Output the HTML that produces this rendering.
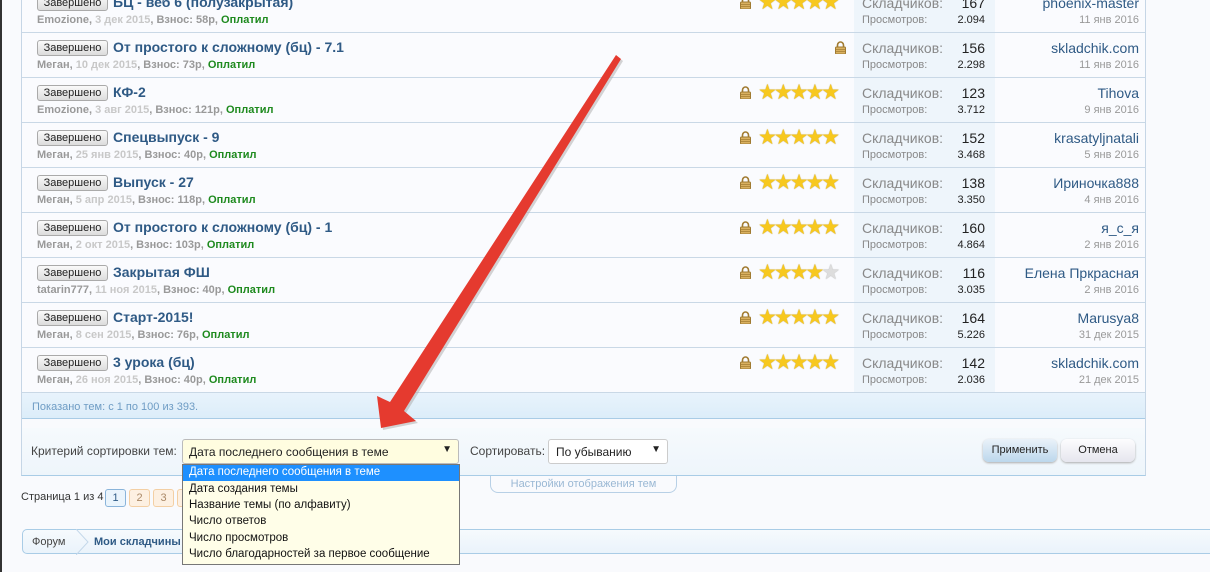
<!DOCTYPE html>
<html><head><meta charset="utf-8"><style>
*{margin:0;padding:0;box-sizing:border-box}
body{width:1210px;height:572px;overflow:hidden;background:#f9fafd;font-family:"Liberation Sans","DejaVu Sans",sans-serif;position:relative}
.edge{position:absolute;left:0;top:0;width:2px;height:572px;background:#333}
.tbl{position:absolute;left:21px;top:-12px;width:1125px;height:488px;border-left:1px solid #c6d6e6;border-right:1px solid #c6d6e6;border-bottom:1px solid #a9cce6}
.row{position:absolute;left:22px;width:1123px;height:45px;border-bottom:1px solid #c9d8e6;background:#fafbfe}
.stat{position:absolute;left:832px;top:0;width:141px;height:44px;background:#eef5fb}
.btn{position:absolute;left:15px;top:7px;width:71px;height:16px;border:1px solid #aaa;border-radius:3px;background:linear-gradient(#fafafa,#dcdcdc);font-size:11px;color:#222;text-align:center;line-height:14px}
.ttl{position:absolute;left:91px;top:6px;font-size:14px;font-weight:bold;color:#2f5a85;white-space:nowrap}
.meta{position:absolute;left:15px;top:26px;font-size:11px;font-weight:bold;color:#999;white-space:nowrap}
.meta i{font-style:normal;color:#c8c8c8}
.meta b{color:#1e8a1e}
.lk{position:absolute;top:8px;width:11px;height:13px}
.st{position:absolute;left:736px;top:2px;font-size:21px;color:#f7c81e;letter-spacing:-3px;text-shadow:0 0 1px #a87c00}
.l1{position:absolute;left:840px;top:7px;font-size:14px;color:#888}
.n1{position:absolute;right:160px;top:7px;font-size:14px;color:#222}
.l2{position:absolute;left:840px;top:26px;font-size:11px;color:#888}
.n2{position:absolute;right:160px;top:26px;font-size:11px;color:#222}
.u{position:absolute;right:6px;top:7px;font-size:14px;color:#2f5a85;white-space:nowrap}
.d{position:absolute;right:6px;top:26px;font-size:11px;color:#999}
</style></head><body>
<div class="edge"></div>
<div class="tbl"></div>

<svg width="0" height="0" style="position:absolute"><defs>
<g id="lock"><path d="M2.5 6V4a3 3 0 0 1 6 0v2" fill="none" stroke="#a07a30" stroke-width="1.6"/><rect x="0.5" y="6" width="10" height="7" rx="1" fill="#d9b060" stroke="#a07a30"/><line x1="1" y1="8.5" x2="10" y2="8.5" stroke="#a07a30" stroke-width=".7"/><line x1="1" y1="10.5" x2="10" y2="10.5" stroke="#a07a30" stroke-width=".7"/></g>
</defs></svg>

<div class="row" style="top:-12px"><div class="stat"></div><div class="btn">Завершено</div><div class="ttl">БЦ - веб 6 (полузакрытая)</div><div class="meta">Emozione, <i>3 дек 2015</i>, Взнос: 58р, <b>Оплатил</b></div><svg class="lk" style="left:718px"><use href="#lock"/></svg><div class="st">★★★★★</div><div class="l1">Складчиков:</div><div class="n1">167</div><div class="l2">Просмотров:</div><div class="n2">2.094</div><div class="u">phoenix-master</div><div class="d">11 янв 2016</div></div>

<div class="row" style="top:33px"><div class="stat"></div><div class="btn">Завершено</div><div class="ttl">От простого к сложному (бц) - 7.1</div><div class="meta">Меган, <i>10 дек 2015</i>, Взнос: 73р, <b>Оплатил</b></div><svg class="lk" style="left:813px"><use href="#lock"/></svg><div class="l1">Складчиков:</div><div class="n1">156</div><div class="l2">Просмотров:</div><div class="n2">2.298</div><div class="u">skladchik.com</div><div class="d">11 янв 2016</div></div>

<div class="row" style="top:78px"><div class="stat"></div><div class="btn">Завершено</div><div class="ttl">КФ-2</div><div class="meta">Emozione, <i>3 авг 2015</i>, Взнос: 121р, <b>Оплатил</b></div><svg class="lk" style="left:718px"><use href="#lock"/></svg><div class="st">★★★★★</div><div class="l1">Складчиков:</div><div class="n1">123</div><div class="l2">Просмотров:</div><div class="n2">3.712</div><div class="u">Tihova</div><div class="d">9 янв 2016</div></div>

<div class="row" style="top:123px"><div class="stat"></div><div class="btn">Завершено</div><div class="ttl">Спецвыпуск - 9</div><div class="meta">Меган, <i>25 янв 2015</i>, Взнос: 40р, <b>Оплатил</b></div><svg class="lk" style="left:718px"><use href="#lock"/></svg><div class="st">★★★★★</div><div class="l1">Складчиков:</div><div class="n1">152</div><div class="l2">Просмотров:</div><div class="n2">3.468</div><div class="u">krasatyljnatali</div><div class="d">5 янв 2016</div></div>

<div class="row" style="top:168px"><div class="stat"></div><div class="btn">Завершено</div><div class="ttl">Выпуск - 27</div><div class="meta">Меган, <i>5 апр 2015</i>, Взнос: 118р, <b>Оплатил</b></div><svg class="lk" style="left:718px"><use href="#lock"/></svg><div class="st">★★★★★</div><div class="l1">Складчиков:</div><div class="n1">138</div><div class="l2">Просмотров:</div><div class="n2">3.350</div><div class="u">Ириночка888</div><div class="d">4 янв 2016</div></div>

<div class="row" style="top:213px"><div class="stat"></div><div class="btn">Завершено</div><div class="ttl">От простого к сложному (бц) - 1</div><div class="meta">Меган, <i>2 окт 2015</i>, Взнос: 103р, <b>Оплатил</b></div><svg class="lk" style="left:718px"><use href="#lock"/></svg><div class="st">★★★★★</div><div class="l1">Складчиков:</div><div class="n1">160</div><div class="l2">Просмотров:</div><div class="n2">4.864</div><div class="u">я_с_я</div><div class="d">2 янв 2016</div></div>

<div class="row" style="top:258px"><div class="stat"></div><div class="btn">Завершено</div><div class="ttl">Закрытая ФШ</div><div class="meta">tatarin777, <i>11 ноя 2015</i>, Взнос: 40р, <b>Оплатил</b></div><svg class="lk" style="left:718px"><use href="#lock"/></svg><div class="st">★★★★<span style="color:#ddd;text-shadow:0 0 1px #999">★</span></div><div class="l1">Складчиков:</div><div class="n1">116</div><div class="l2">Просмотров:</div><div class="n2">3.035</div><div class="u">Елена Пркрасная</div><div class="d">2 янв 2016</div></div>

<div class="row" style="top:303px"><div class="stat"></div><div class="btn">Завершено</div><div class="ttl">Старт-2015!</div><div class="meta">Меган, <i>8 сен 2015</i>, Взнос: 76р, <b>Оплатил</b></div><svg class="lk" style="left:718px"><use href="#lock"/></svg><div class="st">★★★★★</div><div class="l1">Складчиков:</div><div class="n1">164</div><div class="l2">Просмотров:</div><div class="n2">5.226</div><div class="u">Marusya8</div><div class="d">31 дек 2015</div></div>

<div class="row" style="top:348px"><div class="stat"></div><div class="btn">Завершено</div><div class="ttl">3 урока (бц)</div><div class="meta">Меган, <i>26 ноя 2015</i>, Взнос: 40р, <b>Оплатил</b></div><svg class="lk" style="left:718px"><use href="#lock"/></svg><div class="st">★★★★★</div><div class="l1">Складчиков:</div><div class="n1">142</div><div class="l2">Просмотров:</div><div class="n2">2.036</div><div class="u">skladchik.com</div><div class="d">21 дек 2015</div></div>

<div style="position:absolute;left:22px;top:393px;width:1123px;height:26px;background:linear-gradient(#e8f3fc,#dcedf9);border-bottom:1px solid #a9cce6;font-size:11px;color:#6e9cc4;padding:8px 0 0 10px">Показано тем: с 1 по 100 из 393.</div>
<div style="position:absolute;left:22px;top:428px;width:1123px;height:47px;background:linear-gradient(#f6fafd,#eef5fb)"></div>
<div style="position:absolute;left:31px;top:444px;font-size:12px;color:#444">Критерий сортировки тем:</div>
<div style="position:absolute;left:182px;top:439px;width:277px;height:25px;border:1px solid #bbb;border-radius:3px;background:#fffde0;font-size:12px;color:#222;padding:5px 0 0 6px">Дата последнего сообщения в теме<span style="position:absolute;right:6px;top:4px;font-size:10px">▼</span></div>
<div style="position:absolute;left:470px;top:444px;font-size:12px;color:#444">Сортировать:</div>
<div style="position:absolute;left:548px;top:439px;width:120px;height:25px;border:1px solid #ccc;border-radius:3px;background:#fff;font-size:12px;color:#222;padding:5px 0 0 7px">По убыванию<span style="position:absolute;right:6px;top:4px;font-size:10px">▼</span></div>
<div style="position:absolute;left:983px;top:439px;width:74px;height:23px;border-radius:6px;background:linear-gradient(#eaf2f9,#bcd7ec);box-shadow:0 1px 2px #aaa;font-size:11px;color:#222;text-align:center;line-height:23px">Применить</div>
<div style="position:absolute;left:1061px;top:439px;width:74px;height:23px;border-radius:6px;background:linear-gradient(#fdfdfe,#e6e6ee);box-shadow:0 1px 2px #aaa;font-size:11px;color:#222;text-align:center;line-height:23px">Отмена</div>
<div style="position:absolute;left:490px;top:476px;width:187px;height:17px;border:1px solid #b8d0e6;border-top:none;border-radius:0 0 8px 8px;font-size:11px;color:#9ab8d4;text-align:center;line-height:16px">Настройки отображения тем</div>

<div style="position:absolute;left:21px;top:491px;font-size:11px;color:#333">Страница 1 из 4</div>
<div style="position:absolute;left:105px;top:489px;width:21px;height:18px;border:1px solid #8ab4da;border-radius:3px;background:#eaf4fc;font-size:11px;color:#2f5a85;text-align:center;line-height:16px">1</div>
<div style="position:absolute;left:129px;top:489px;width:21px;height:18px;border:1px solid #f3cfa4;border-radius:3px;background:#fdf0e2;font-size:11px;color:#aa8866;text-align:center;line-height:16px">2</div>
<div style="position:absolute;left:153px;top:489px;width:21px;height:18px;border:1px solid #f3cfa4;border-radius:3px;background:#fdf0e2;font-size:11px;color:#aa8866;text-align:center;line-height:16px">3</div>
<div style="position:absolute;left:177px;top:489px;width:10px;height:18px;border:1px solid #f3cfa4;border-radius:3px;background:#fdf0e2"></div>

<div style="position:absolute;left:22px;top:529px;width:1200px;height:25px;border:1px solid #a9cce6;border-radius:5px 0 0 5px;background:linear-gradient(#f6fafd,#eaf3fb)"></div>
<div style="position:absolute;left:32px;top:536px;font-size:11px;color:#444">Форум</div>
<svg style="position:absolute;left:76px;top:529px" width="14" height="26"><path d="M0 0 L12 13 L0 26" fill="none" stroke="#c4d8ea"/></svg>
<div style="position:absolute;left:94px;top:536px;font-size:11px;font-weight:bold;color:#2f5a85">Мои складчины</div>

<div style="position:absolute;left:182px;top:464px;width:278px;height:101px;border:1px solid #777;background:#fffee8;font-size:11.5px;color:#111">
<div style="background:#1e90ff;color:#fff;height:16px;padding:1px 0 0 6px">Дата последнего сообщения в теме</div>
<div style="height:16.5px;padding:2px 0 0 6px">Дата создания темы</div>
<div style="height:16.5px;padding:1px 0 0 6px">Название темы (по алфавиту)</div>
<div style="height:16.5px;padding:1px 0 0 6px">Число ответов</div>
<div style="height:16.5px;padding:1px 0 0 6px">Число просмотров</div>
<div style="height:16.5px;padding:1px 0 0 6px">Число благодарностей за первое сообщение</div>
</div>

<svg style="position:absolute;left:0;top:0" width="1210" height="572">
<polygon points="621,59 616,55 390,402 377,396 381,428 416,421 404,411" fill="#aaa" opacity=".5" transform="translate(2,2)"/>
<polygon points="621,59 616,55 390,402 377,396 381,428 416,421 404,411" fill="#e53a2f"/>
</svg>
</body></html>
